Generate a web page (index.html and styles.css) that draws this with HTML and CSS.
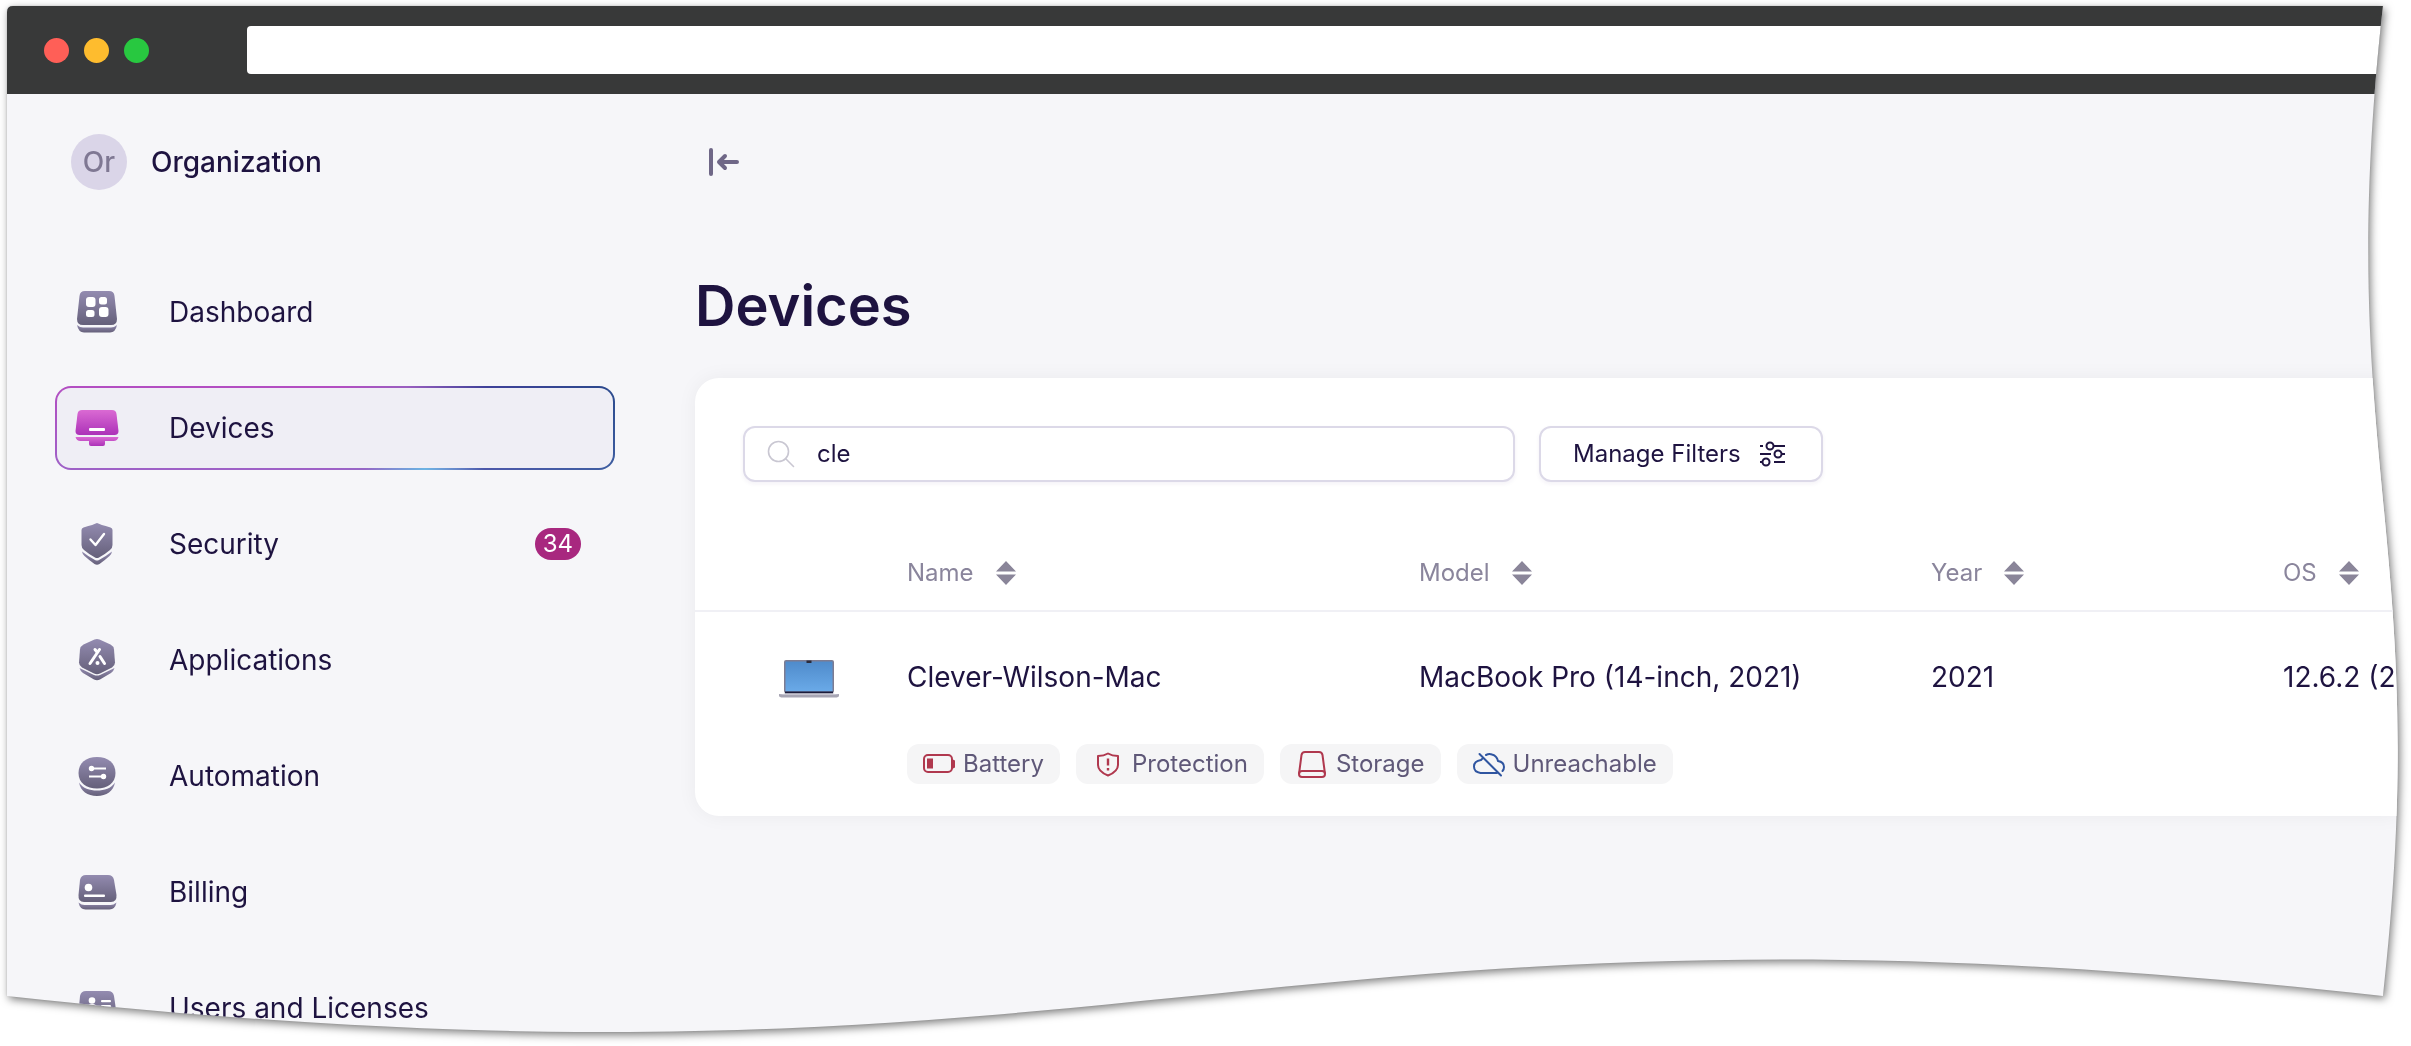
FILE: index.html
```
<!DOCTYPE html>
<html lang="en">
<head>
<meta charset="utf-8">
<meta name="viewport" content="width=device-width, initial-scale=1">
<title>Devices</title>
<link rel="stylesheet" href="styles.css">
</head>
<body>
<svg class="defs" width="0" height="0" aria-hidden="true">
  <defs>
    <clipPath id="torn" clipPathUnits="objectBoundingBox">
      <path d="M0 .0058 Q0 0 .0025 0 L.9937 0 C.9724 .4421 1.0151 .519 .9937 .964 C.5211 .8413 .473 1.0857 0 .964 Z"/>
    </clipPath>
    <linearGradient id="slate" x1="0" y1="0" x2="0" y2="1">
      <stop offset="0" stop-color="#938bb0"/><stop offset="1" stop-color="#65607a"/>
    </linearGradient>
    <linearGradient id="pink" x1="0" y1="0" x2="0" y2="1">
      <stop offset="0" stop-color="#da6ad3"/><stop offset="1" stop-color="#ac32b8"/>
    </linearGradient>
    <linearGradient id="screen" x1="0" y1="0" x2="0" y2="1">
      <stop offset="0" stop-color="#4f8bcb"/><stop offset="1" stop-color="#6aaae8"/>
    </linearGradient>
    <symbol id="sort" viewBox="0 0 20 24">
      <path d="M10 0 20 10.5H0zM10 24 0 13.5h20z" fill="#8a8599"/>
    </symbol>
  </defs>
</svg>

<div class="shadow">
<div class="window">
  <div class="titlebar">
    <div class="lights"><span class="light close"></span><span class="light minimize"></span><span class="light expand"></span></div>
    <input class="address" type="text" aria-label="Address">
  </div>

  <div class="app">
    <aside class="sidebar">
      <div class="org"><span class="avatar">Or</span><span>Organization</span></div>
      <nav class="nav">
        <a class="item" href="#dashboard">
          <svg class="nav-icon" viewBox="0 0 48 48" fill="url(#slate)"><path d="M12 3h24q5 0 5.500 5L44 31q0 6-6 6H10q-6 0-6-6L6.500 8Q7 3 12 3z"/><path d="M4 37q3 2.500 6 2.500h28q3 0 6-2.500-1.500 7.500-7 7.500H11q-5.500 0-7-7.500z"/><g fill="#fff"><rect x="13" y="9" width="9.500" height="10" rx="3"/><rect x="26" y="9" width="8" height="7.500" rx="2.500"/><rect x="13" y="22" width="8.500" height="7" rx="2.500"/><rect x="26" y="19" width="9.500" height="10" rx="3"/></g></svg>
          <span>Dashboard</span>
        </a>
        <a class="item active" href="#devices" aria-current="page">
          <svg class="nav-icon" viewBox="0 0 48 48" fill="url(#pink)"><path d="M9 6h30q4 0 4.500 4L45.500 27q0 4-4 4h-35q-4 0-4-4L4.500 10Q5 6 9 6z"/><path d="M2.500 33h43q-1 4-5 4H32v3q0 2-2 2H18q-2 0-2-2v-3H7.500q-4 0-5-4z"/><rect x="16" y="24" width="16" height="3" rx="1" fill="#fff"/></svg>
          <span>Devices</span>
        </a>
        <a class="item" href="#security">
          <svg class="nav-icon" viewBox="0 0 48 48" fill="url(#slate)"><path d="M24 3q3 1.500 13.500 4.500 2 .5 2 2.500v15q0 3-2.500 5-6 5-11 7.500-2 1-4 0-5-2.500-11-7.500-2.500-2-2.500-5V10q0-2 2-2.500Q21 4.500 24 3z"/><path d="M9 31.500q7 5.500 13 8.500 2 1 4 0 6-3 13-8.500-.5 3-2.500 4.500-5 4.500-10 8-2.500 1.500-5 0-5-3.500-10-8-2-1.500-2.500-4.500z"/><path d="m17.500 19.500 5 5.500L31 14" fill="none" stroke="#fff" stroke-width="2.400" stroke-linecap="round" stroke-linejoin="round"/></svg>
          <span>Security</span><span class="badge">34</span>
        </a>
        <a class="item" href="#applications">
          <svg class="nav-icon" viewBox="0 0 48 48" fill="url(#slate)"><path d="M21.500 3.600q2.500-1 5 0l11 5q3 1.500 3.500 5l1 13q0 3-3 5l-12 6q-3 1.200-6 0l-12-6q-3-2-3-5l1-13q.5-3.500 3.500-5z"/><path d="M6.500 32 21 39q3 1.200 6 0l14.500-7q-1 3.500-3.500 5l-11 6.500q-3 1.500-6 0L10 37q-2.500-1.500-3.500-5z"/><g fill="none" stroke="#fff" stroke-width="3" stroke-linecap="round"><path d="M26.500 13.500 17 27.500M22 13.500l2 2.500M27 20.500l4.500 7"/></g><circle cx="24.500" cy="27" r="2" fill="#fff"/></svg>
          <span>Applications</span>
        </a>
        <a class="item" href="#automation">
          <svg class="nav-icon" viewBox="0 0 48 48" fill="url(#slate)"><path d="M24 5c11 0 18.500 6 18.500 16S34.500 36.500 24 36.500 5.500 31 5.500 21 13 5 24 5z"/><path d="M6 30.500c4 6 10.500 8 18 8s14-2 18-8c-1.500 8.500-8.500 13.500-18 13.500S7.500 39 6 30.500z"/><g fill="#fff"><circle cx="18.500" cy="16.500" r="2.700"/><circle cx="30.500" cy="24.500" r="2.700"/><rect x="20" y="15.500" width="13" height="2"/><rect x="16" y="23.500" width="13" height="2"/></g></svg>
          <span>Automation</span>
        </a>
        <a class="item" href="#billing">
          <svg class="nav-icon" viewBox="0 0 48 48" fill="url(#slate)"><path d="M13 7h22q5 0 6 5l2.500 15q.5 7-5.500 7H11q-6 0-5.500-7L7 12q1-5 6-5z"/><path d="M5.500 34.500q3 2.500 6 2.500h26q3 0 6-2.500-1.500 7-7 7h-24q-5.500 0-7-7z"/><circle cx="15.500" cy="19.500" r="3.800" fill="#fff"/><rect x="11" y="26.500" width="21" height="2.500" rx="1" fill="#fff"/></svg>
          <span>Billing</span>
        </a>
        <a class="item" href="#users">
          <svg class="nav-icon" viewBox="0 0 48 48" fill="url(#slate)"><path d="M13 7h22q5 0 6 5l2.500 17q.5 7-5.500 7H11q-6 0-5.500-7L7 12q1-5 6-5z"/><g fill="#fff"><circle cx="19" cy="16.500" r="3.300"/><path d="M13 25q1-5 6-5t6 5z"/><rect x="28" y="16" width="10" height="2.200" rx="1"/><rect x="28" y="21" width="10" height="2.200" rx="1"/></g></svg>
          <span>Users and Licenses</span>
        </a>
      </nav>
    </aside>

    <main class="main">
      <button class="collapse" type="button" aria-label="Collapse sidebar">
        <svg width="32" height="32" viewBox="0 0 32 32" fill="none" stroke="#6f6787" stroke-width="4" stroke-linecap="round" stroke-linejoin="round"><path d="M4 4v24M30 16H12M18 10l-6 6 6 6"/></svg>
      </button>
      <h1>Devices</h1>

      <section class="card">
        <div class="toolbar">
          <label class="search">
            <svg width="28" height="28" viewBox="0 0 28 28" fill="none" stroke="#c9c7d2" stroke-width="1.600" stroke-linecap="round"><circle cx="11.500" cy="11.500" r="10"/><path d="m18.500 18.500 8 8"/></svg>
            <input type="text" value="cle" aria-label="Search devices">
          </label>
          <button class="filters" type="button">
            Manage Filters
            <svg width="28" height="28" viewBox="0 0 28 28" fill="none" stroke="#1e1340" stroke-width="2"><path d="M1 6h3M14 6h12M1 14h11M23 14h3M1 22h3M15 22h11"/><circle cx="11" cy="6" r="3.500"/><circle cx="19" cy="14" r="3.500"/><circle cx="7" cy="22" r="3.500"/></svg>
          </button>
        </div>

        <table class="devices">
          <colgroup><col class="col-picture"><col class="col-name"><col class="col-model"><col class="col-year"><col></colgroup>
          <thead>
            <tr>
              <td></td>
              <th scope="col"><button type="button" class="sort">Name <svg width="20" height="24"><use href="#sort"/></svg></button></th>
              <th scope="col"><button type="button" class="sort">Model <svg width="20" height="24"><use href="#sort"/></svg></button></th>
              <th scope="col"><button type="button" class="sort">Year <svg width="20" height="24"><use href="#sort"/></svg></button></th>
              <th scope="col"><button type="button" class="sort">OS <svg width="20" height="24"><use href="#sort"/></svg></button></th>
            </tr>
          </thead>
          <tbody>
            <tr class="device">
              <td class="picture">
                <svg width="62" height="40" viewBox="0 0 62 40"><rect x="6" y="1" width="50" height="33" rx="2" fill="#7d7c92"/><rect x="7.500" y="2.500" width="47" height="30" fill="url(#screen)"/><path d="M28.500 1.500h5v2.500h-5z" fill="#2a2a3a"/><path d="M7 32.500h48v2H7z" fill="#1c1b3a"/><path d="M1 35h60v1.500q0 2-4 2H5q-4 0-4-2z" fill="#a7a5b3"/><path d="M7 34.500h48L61 36H1z" fill="#c5c3cf"/></svg>
              </td>
              <td>Clever-Wilson-Mac</td>
              <td>MacBook Pro (14-inch, 2021)</td>
              <td>2021</td>
              <td>12.6.2 (2</td>
            </tr>
            <tr class="issues">
              <td></td>
              <td colspan="4">
                <ul class="chips">
                  <li class="chip"><svg width="32" height="32" viewBox="0 0 32 32" fill="none" stroke="#b0384e" stroke-width="2"><rect x="1" y="7" width="28" height="17" rx="4"/><path d="M4 10.500h6v10H4zM29 11l3 1.500v7L29 21z" fill="#b0384e" stroke="none"/></svg>Battery</li>
                  <li class="chip"><svg width="32" height="32" viewBox="0 0 32 32" fill="none" stroke="#b0384e" stroke-width="2"><path d="M16 5.500q4 2.500 10 2.500v9q0 6.500-10 10.500Q6 23.500 6 17V8q6 0 10-2.500z" stroke-linejoin="round"/><path d="M16 10.500v7M16 20v2.500" stroke-width="2.400"/></svg>Protection</li>
                  <li class="chip"><svg width="32" height="32" viewBox="0 0 32 32" fill="none" stroke="#b0384e" stroke-width="2"><path d="M3 26 5.500 7q.5-3 3.500-3h14q3 0 3.500 3L29 26"/><rect x="3" y="23" width="26" height="6" rx="3"/></svg>Storage</li>
                  <li class="chip"><svg width="32" height="32" viewBox="0 0 32 32" fill="none" stroke="#2f55a0" stroke-width="2" stroke-linecap="round"><path d="M6.500 6 28 27.500M24 25H7.500Q1 24 1 18.500T8 12l1-1M13 7q3-1.500 6-.5 5 1.500 6 6.500 6 1 6 6 0 2.500-1.500 4"/></svg>Unreachable</li>
                </ul>
              </td>
            </tr>
          </tbody>
        </table>
      </section>
    </main>
  </div>
</div>
</div>
</body>
</html>
```
FILE: styles.css
```
* { box-sizing: border-box; }

body {
  margin: 0;
  background: #fff;
  color: #1e1340;
  font: 28px/36px Inter, "Liberation Sans", sans-serif;
  overflow: hidden;
}

button, input { font: inherit; color: inherit; }
button { background: none; border: 0; padding: 0; cursor: pointer; }
svg { display: block; flex: none; }
.defs { position: absolute; }

/* Torn-edge browser window */
.shadow {
  padding: 6px 13px 13px 7px;
  filter: drop-shadow(0 0 1px rgba(0, 0, 0, .1)) drop-shadow(2px 3px 4px rgba(0, 0, 0, .5));
}
.window {
  display: flex;
  flex-direction: column;
  height: calc(100vh - 19px);
  overflow: hidden;
  background: #f6f6f9;
  clip-path: url(#torn);
}
.titlebar {
  flex: none;
  display: flex;
  align-items: center;
  gap: 98px;
  height: 88px;
  padding-left: 37px;
  background: #383939;
}
.lights { display: flex; gap: 15px; }
.light { width: 25px; height: 25px; border-radius: 50%; }
.close { background: #ff5f57; }
.minimize { background: #febc2e; }
.expand { background: #28c840; }
.address {
  flex: 1;
  height: 48px;
  padding: 0 16px;
  border: 0;
  border-radius: 4px;
  background: #fff;
}

.app { display: flex; gap: 80px; }

/* Sidebar */
.sidebar { flex: none; width: 608px; padding: 40px 0 0 48px; }
.org { display: flex; align-items: center; gap: 24px; padding-left: 16px; font-weight: 500; }
.avatar {
  width: 56px;
  border-radius: 50%;
  background: #dad5e8;
  color: #7f7893;
  line-height: 56px;
  text-align: center;
}
.nav { display: flex; flex-direction: column; gap: 32px; margin-top: 80px; }
.item {
  display: flex;
  align-items: center;
  gap: 48px;
  height: 84px;
  padding: 0 16px;
  border: 2px solid transparent;
  border-radius: 16px;
  color: inherit;
  text-decoration: none;
}
.active {
  background:
    linear-gradient(#efeef5, #efeef5) padding-box,
    radial-gradient(60px 40px at 66% 100%, #6db4e4, transparent) border-box,
    linear-gradient(transparent, rgba(110, 140, 210, .3)) border-box,
    linear-gradient(95deg, #b34ec2 50%, #9a5fc0 62%, #3f4199 76%, #2a4a8c) border-box;
}
.nav-icon { width: 48px; height: 48px; }
.badge {
  margin: 0 16px 0 auto;
  padding: 0 8px;
  border-radius: 16px;
  background: #a8287f;
  color: #fff;
  font-size: 24px;
  line-height: 32px;
}

/* Main column */
.main { flex: 1; min-width: 0; padding-top: 40px; }
.collapse { display: grid; place-items: center; width: 56px; height: 56px; }
h1 { margin: 82px 0 38px; font-size: 56px; line-height: 68px; font-weight: 600; }
.card {
  padding-top: 48px;
  border-radius: 24px 0 0 24px;
  background: #fff;
  box-shadow: 0 0 20px rgba(0, 0, 0, .05);
}
.toolbar { display: flex; gap: 24px; padding: 0 48px 54px; font-size: 24px; }
.search, .filters {
  display: flex;
  align-items: center;
  height: 56px;
  border: 2px solid #dcd9e8;
  border-radius: 12px;
  background: #fff;
  box-shadow: 0 2px 4px rgba(60, 40, 120, .06);
}
.search { flex: 0 1 772px; gap: 22px; padding: 0 24px 0 22px; }
.search input { flex: 1; min-width: 0; padding: 0; border: 0; outline: 0; background: none; }
.filters { gap: 18px; padding: 0 34px 0 32px; white-space: nowrap; }

.devices { width: 100%; table-layout: fixed; border-collapse: separate; border-spacing: 0; white-space: nowrap; }
.col-picture { width: 212px; }
.col-name, .col-model { width: 512px; }
.col-year { width: 352px; }
.devices td, .devices th { padding: 0; text-align: left; vertical-align: middle; }
.devices thead td, .devices thead th { height: 76px; border-bottom: 2px solid #f0f0f5; }
.sort { display: flex; align-items: center; gap: 22px; color: #8a859c; font-size: 24px; font-weight: 400; }
.device { height: 130px; }
.picture svg { margin: 4px 0 0 83px; }
.devices .issues td { padding: 2px 0 32px; }
.chips { display: flex; gap: 16px; margin: 0; padding: 0; list-style: none; }
.chip {
  display: flex;
  align-items: center;
  gap: 8px;
  height: 40px;
  padding: 0 16px;
  border-radius: 12px;
  background: #f5f5f6;
  color: #5f5878;
  font-size: 24px;
}
```
